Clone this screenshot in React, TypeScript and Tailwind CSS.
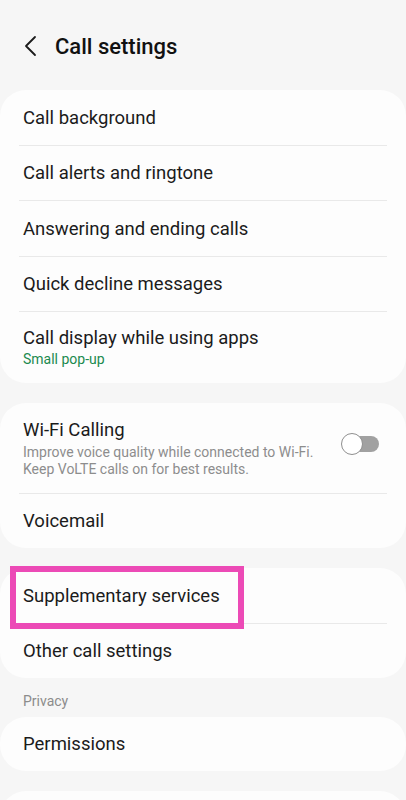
import React from "react";

const font = { fontFamily: "Roboto, 'Noto Sans', sans-serif" };

function Row({ title, sub, h = "h-[55px]", subClass = "" }: { title: string; sub?: string; h?: string; subClass?: string }) {
  return (
    <div className={`${h} flex flex-col justify-center px-[23px]`}>
      <div className="text-[18.5px] leading-[24px] text-[#1b1b1b]">{title}</div>
      {sub && <div className={`text-[14px] leading-[18px] ${subClass}`}>{sub}</div>}
    </div>
  );
}

function Divider() {
  return <div className="mx-[19px] h-px bg-[#e9e9e9]" />;
}

export default function App() {
  return (
    <div className="relative w-[406px] h-[800px] overflow-hidden bg-[#f6f6f6]" style={font}>
      {/* header */}
      <div className="h-[90px] flex items-center pl-[22px] pt-[2px]">
        <svg width="18" height="22" viewBox="0 0 18 22" className="mr-[15px]">
          <polyline points="13,2 4,11 13,20" fill="none" stroke="#1b1b1b" strokeWidth="1.8" strokeLinecap="round" strokeLinejoin="round" />
        </svg>
        <div className="text-[22px] font-medium text-[#111]">Call settings</div>
      </div>

      <div className="flex flex-col gap-[20px]">
        <div className="bg-[#fdfdfd] rounded-[26px]">
          <Row title="Call background" />
          <Divider />
          <Row title="Call alerts and ringtone" h="h-[54px]" />
          <Divider />
          <Row title="Answering and ending calls" />
          <Divider />
          <Row title="Quick decline messages" h="h-[54px]" />
          <Divider />
          <Row title="Call display while using apps" sub="Small pop-up" h="h-[71px]" subClass="text-[#1b8a4f] pb-[2px]" />
        </div>

        <div className="bg-[#fdfdfd] rounded-[26px]">
          <div className="h-[90px] flex items-center pl-[23px] pr-[27px]">
            <div className="flex-1">
              <div className="text-[18.5px] leading-[24px] text-[#1b1b1b] mb-[2px]">Wi-Fi Calling</div>
              <div className="text-[14px] leading-[17px] text-[#8d8d8d]">Improve voice quality while connected to Wi-Fi.</div>
              <div className="text-[14px] leading-[17px] text-[#8d8d8d]">Keep VoLTE calls on for best results.</div>
            </div>
            <div className="relative w-[38px] h-[22px] mt-[-8px]">
              <div className="absolute right-0 top-[3px] w-[34px] h-[16px] rounded-full bg-[#a1a1a1]" />
              <div className="absolute left-0 top-0 w-[22px] h-[22px] rounded-full bg-white border-[1.5px] border-[#8f8f8f]" />
            </div>
          </div>
          <Divider />
          <Row title="Voicemail" h="h-[54px]" />
        </div>

        <div className="bg-[#fdfdfd] rounded-[26px]">
          <Row title="Supplementary services" />
          <Divider />
          <Row title="Other call settings" h="h-[54px]" />
        </div>
      </div>

      <div className="h-[39px] flex items-end pb-[5px] px-[23px] text-[14px] text-[#8c8c8c]">Privacy</div>

      <div className="flex flex-col gap-[20px]">
        <div className="bg-[#fdfdfd] rounded-[26px]">
          <Row title="Permissions" h="h-[54px]" />
        </div>
        <div className="bg-[#fdfdfd] rounded-[26px] h-[60px]" />
      </div>

      {/* highlight annotation */}
      <div className="absolute left-[10px] top-[566px] w-[234px] h-[63px] border-[6px] border-[#ec4ab6]" />
    </div>
  );
}
